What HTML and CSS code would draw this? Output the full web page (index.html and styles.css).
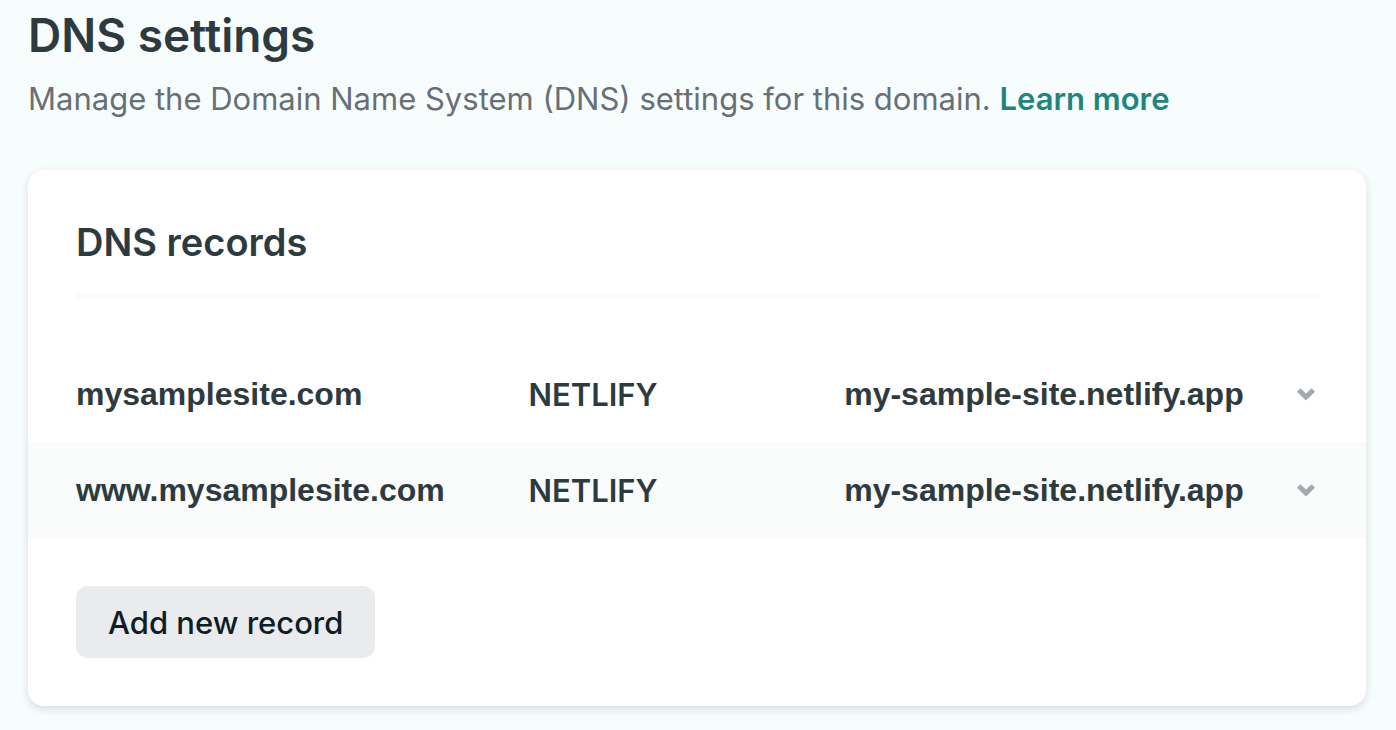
FILE: index.html
```html
<!DOCTYPE html>
<html lang="en">
<head>
<meta charset="utf-8">
<title>DNS settings</title>
<link rel="stylesheet" href="styles.css">
</head>
<body>
<main class="page">
  <header class="intro">
    <h1 class="title">DNS settings</h1>
    <p class="subtitle">Manage the Domain Name System (DNS) settings for this domain. <a class="link" href="#">Learn more</a></p>
  </header>
  <section class="card" aria-labelledby="records">
    <h2 class="card-title" id="records">DNS records</h2>
    <table class="records" aria-labelledby="records">
      <tbody>
        <tr>
          <td class="name">mysamplesite.com</td>
          <td class="type">NETLIFY</td>
          <td class="value">my-sample-site.netlify.app</td>
          <td class="toggle"><button class="expand" type="button" aria-label="Show mysamplesite.com record"><svg class="chevron" viewBox="0 0 24 16" aria-hidden="true"><path d="M4.700 4L12 11L19.300 4"/></svg></button></td>
        </tr>
        <tr>
          <td class="name">www.mysamplesite.com</td>
          <td class="type">NETLIFY</td>
          <td class="value">my-sample-site.netlify.app</td>
          <td class="toggle"><button class="expand" type="button" aria-label="Show www.mysamplesite.com record"><svg class="chevron" viewBox="0 0 24 16" aria-hidden="true"><path d="M4.700 4L12 11L19.300 4"/></svg></button></td>
        </tr>
      </tbody>
    </table>
    <button class="add" type="button">Add new record</button>
  </section>
</main>
</body>
</html>
```
FILE: styles.css
```css
* { box-sizing: border-box; }
body { margin: 0; background: #f7fdfd; color: #2d3b41; font-family: Inter, sans-serif; }
.page { padding: 7px 30px 24px 28px; }
.title { margin: 0; font-size: 46px; line-height: 56px; font-weight: 600; }
.subtitle { margin: 12px 0 0; font-size: 31px; line-height: 48px; color: #686f75; }
.link { color: #1f857d; font-weight: 600; text-decoration: none; }
.card { margin-top: 47px; padding: 48px 0; background: #fff; border-radius: 16px; box-shadow: 0 3px 8px rgba(14, 30, 37, 0.14); }
.card-title { margin: 0 48px 48px; padding-bottom: 28px; border-bottom: 4px solid #f9fafa; font-size: 38px; line-height: 48px; font-weight: 600; }
.records { width: 100%; border-collapse: collapse; table-layout: fixed; line-height: 48px; }
.records td { height: 96px; padding: 0; }
.records tr:nth-child(even) { background: #fafbfb; }
.records .name { width: 37.4%; padding-left: 48px; }
.name, .value { font: 700 32px/48px "Liberation Sans", sans-serif; }
.records .type { width: 23.6%; padding-top: 2px; font-size: 31px; font-weight: 600; }
.records .toggle { width: 80px; padding-right: 48px; }
.expand { display: flex; margin-left: auto; padding: 0; border: 0; background: none; }
.chevron { width: 24px; height: 16px; fill: none; stroke: #a3a9ac; stroke-width: 5; }
.add { display: block; margin: 48px 0 0 48px; height: 72px; padding: 2px 32px 0; border: 0; border-radius: 12px; background: #e9ebed; color: #0e1e25; font: 500 31px/48px Inter, sans-serif; }
```
